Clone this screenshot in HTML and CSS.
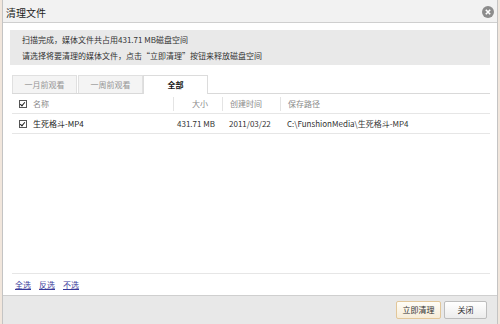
FILE: index.html
```html
<!DOCTYPE html>
<html lang="zh-CN">
<head>
  <meta charset="UTF-8">
  <title>清理文件</title>
  <link rel="stylesheet" href="styles.css">
</head>
<body>
  <div class="finestra">
    <div class="barra-titolo">
      <span class="titolo">清理文件</span>
      <span class="chiudi">
        <svg width="12" height="12" viewBox="0 0 12 12">
          <circle cx="6" cy="6" r="6" fill="#8c8c8c"/>
          <path d="M3.8 3.8 L8.2 8.2 M8.2 3.8 L3.8 8.2" stroke="#fff" stroke-width="1.6"/>
        </svg>
      </span>
    </div>

    <div class="contenuto">
      <div class="info">
        <div>扫描完成，媒体文件共占用431.71 MB磁盘空间</div>
        <div>请选择将要清理的媒体文件，点击“立即清理”按钮来释放磁盘空间</div>
      </div>

      <div class="schede">
        <div class="scheda">一月前观看</div>
        <div class="scheda">一周前观看</div>
        <div class="scheda attiva">全部</div>
      </div>

      <div class="tabella">
        <div class="riga intestazione">
          <div class="cella nome"><span class="spunta"></span>名称</div>
          <div class="cella dim sep">大小</div>
          <div class="cella data sep">创建时间</div>
          <div class="cella percorso sep">保存路径</div>
        </div>
        <div class="riga">
          <div class="cella nome"><span class="spunta"></span>生死格斗-MP4</div>
          <div class="cella dim">431.71 MB</div>
          <div class="cella data">2011/03/22</div>
          <div class="cella percorso">C:\FunshionMedia\生死格斗-MP4</div>
        </div>
      </div>

      <div class="vuoto"></div>

      <div class="selezione">
        <a href="#">全选</a>
        <a href="#">反选</a>
        <a href="#">不选</a>
      </div>
    </div>

    <div class="piede">
      <button class="pulsante primario">立即清理</button>
      <button class="pulsante">关闭</button>
    </div>
  </div>
</body>
</html>
```

FILE: styles.css
```css
body {
  margin: 0;
  padding: 0;
  background: #f1e6dc;
  font-family: "Noto Sans CJK SC", "DejaVu Sans", sans-serif;
  font-size: 8px;
  color: #333;
}

.finestra {
  margin: 0 2px;
  height: 324px;
  background: #fff;
  border-left: 1px solid #c4c4c4;
  border-right: 1px solid #c4c4c4;
  display: flex;
  flex-direction: column;
  box-sizing: border-box;
}

.barra-titolo {
  height: 22px;
  background: #f2f2f2;
  border-bottom: 1px solid #cfcfcf;
  display: flex;
  align-items: center;
  justify-content: space-between;
  padding: 0 3px 0 3px;
  flex-shrink: 0;
}

.titolo {
  font-size: 10px;
  color: #222;
  padding-top: 2px;
}

.chiudi {
  display: flex;
  padding-top: 1px;
}

.contenuto {
  flex: 1;
  display: flex;
  flex-direction: column;
  padding: 7px 7px 0 7px;
}

.info {
  background: #e9e9e9;
  padding: 2px 12px 1px;
  line-height: 16px;
  color: #333;
}

.schede {
  display: flex;
  margin: 10px 0 0 2px;
  border-bottom: 1px solid #d9d9d9;
  height: 18px;
}

.scheda {
  width: 65px;
  height: 18px;
  line-height: 18px;
  text-align: center;
  background: #f4f4f4;
  border: 1px solid #e0e0e0;
  border-bottom: none;
  color: #959595;
  box-sizing: border-box;
}

.scheda + .scheda {
  margin-left: 1px;
}

.scheda.attiva {
  background: #fff;
  color: #111;
  font-weight: bold;
  height: 19px;
  margin-left: 0;
  border-color: #dcdcdc;
}

.tabella {
  margin-left: 2px;
}

.riga {
  display: grid;
  grid-template-columns: 161px 49px 58px 1fr;
  height: 19px;
  align-items: center;
  border-bottom: 1px solid #e6e6e6;
}

.intestazione {
  color: #8a8a8a;
}

.cella {
  white-space: nowrap;
  height: 100%;
  display: flex;
  align-items: center;
}

.nome {
  padding-left: 7px;
}

.spunta {
  width: 6px;
  height: 6px;
  border: 1px solid #555;
  margin-right: 6px;
  position: relative;
  background: #fff;
}

.spunta::after {
  content: "";
  position: absolute;
  left: 1px;
  top: 0;
  width: 2px;
  height: 4px;
  border-right: 1.5px solid #222;
  border-bottom: 1.5px solid #222;
  transform: rotate(40deg);
}

.intestazione .sep {
  border-left: 1px solid #e4e4e4;
  height: 14px;
}

.intestazione .dim {
  justify-content: center;
}

.intestazione .data {
  padding-left: 10px;
}

.intestazione .percorso {
  padding-left: 9px;
}

.riga .dim {
  padding-left: 4px;
}

.riga .data {
  padding-left: 7px;
}

.riga .percorso {
  padding-left: 7px;
}

.riga:not(.intestazione) .nome {
  color: #222;
}

.vuoto {
  flex: 1;
}

.selezione {
  margin-left: 2px;
  border-top: 1px solid #e6e6e6;
  height: 21px;
  display: flex;
  align-items: center;
  gap: 8px;
  padding-left: 3px;
}

.selezione a {
  color: #3a3a9a;
  text-decoration: underline;
}

.piede {
  height: 29px;
  flex-shrink: 0;
  background: #e8e8e8;
  border-top: 1px solid #cfcfcf;
  display: flex;
  align-items: center;
  justify-content: flex-end;
  gap: 3px;
  padding: 0 10px 1px 0;
  box-sizing: border-box;
}

.pulsante {
  height: 18px;
  width: 43px;
  padding: 0;
  font-family: inherit;
  font-size: 8px;
  color: #333;
  background: linear-gradient(#ffffff, #ececec);
  border: 1px solid #bdbdbd;
  border-radius: 2px;
}

.pulsante.primario {
  width: 45px;
  background: linear-gradient(#fffdf7, #f6ecd8);
  border-color: #e2c79a;
}
```
